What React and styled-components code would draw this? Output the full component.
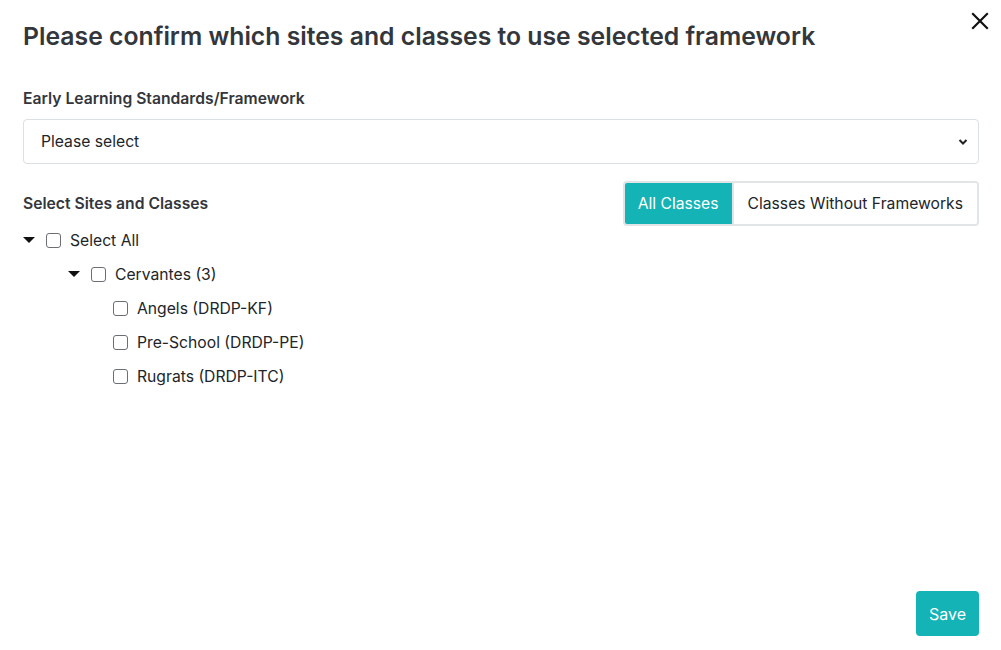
import React from "react";
import styled, { createGlobalStyle } from "styled-components";

const Global = createGlobalStyle`
  html, body { margin: 0; padding: 0; background: #fff; }
  body { font-family: Inter, "Noto Sans", sans-serif; color: #333a40; }
  * { box-sizing: border-box; }
`;

const Modal = styled.div`
  width: 1001px;
  height: 650px;
  display: flex;
  flex-direction: column;
  padding: 0 22px 14px 23px;
  position: relative;
`;

const Header = styled.div`
  display: flex;
  align-items: flex-start;
  justify-content: space-between;
  padding-top: 21px;
`;

const Title = styled.h2`
  margin: 0;
  font-size: 24.75px;
  line-height: 30px;
  font-weight: 600;
  color: #33363b;
`;

const Close = styled.button`
  position: absolute;
  top: 10px;
  right: 10px;
  width: 22px;
  height: 22px;
  border: none;
  background: none;
  padding: 0;
  display: flex;
  align-items: center;
  justify-content: center;
  cursor: pointer;
`;

const Label = styled.div`
  font-size: 15.7px;
  font-weight: 600;
  color: #33363b;
  line-height: 20px;
`;

const FieldLabel = styled(Label)`
  margin-top: 38px;
  margin-bottom: 10px;
`;

const SelectBox = styled.div`
  height: 45px;
  border: 1px solid #dcdfe3;
  border-radius: 4px;
  display: flex;
  align-items: center;
  justify-content: space-between;
  padding: 0 10px 0 17px;
  font-size: 15.7px;
  color: #212529;
`;

const SectionRow = styled.div`
  margin-top: 18px;
  display: flex;
  align-items: center;
  justify-content: space-between;
`;

const ToggleGroup = styled.div`
  display: flex;
  border: 2px solid #e2e5e8;
  border-radius: 4px;
  overflow: hidden;
  height: 45px;
  margin-top: -1px;
`;

const ToggleButton = styled.button`
  border: none;
  margin: 0;
  font-family: inherit;
  font-size: 15.7px;
  padding: 0 ${(p) => (p.$active ? 13 : 14)}px;
  background: ${(p) => (p.$active ? "#13b3b6" : "#fff")};
  color: ${(p) => (p.$active ? "#fff" : "#212529")};
  border-left: ${(p) => (p.$active ? "none" : "2px solid #e2e5e8")};
  cursor: pointer;
`;

const Tree = styled.div`
  margin-top: -3px;
  display: flex;
  flex-direction: column;
`;

const Row = styled.div`
  height: 34px;
  display: flex;
  align-items: center;
  padding-left: ${(p) => p.$indent}px;
  font-size: 15.7px;
  color: #212529;
`;

const Caret = styled.span`
  width: 0;
  height: 0;
  border-left: 6px solid transparent;
  border-right: 6px solid transparent;
  border-top: 6px solid #111;
  margin-right: 11px;
`;

const Box = styled.span`
  width: 15px;
  height: 15px;
  border: 1px solid #6b6f73;
  border-radius: 3px;
  background: #fff;
  margin-right: 9px;
  flex: none;
`;

const Spacer = styled.div`
  flex: 1;
`;

const Footer = styled.div`
  display: flex;
  justify-content: flex-end;
`;

const SaveButton = styled.button`
  height: 45px;
  width: 63px;
  padding: 0;
  border: none;
  border-radius: 4px;
  background: #13b3b6;
  color: #fff;
  font-family: inherit;
  font-size: 16px;
  cursor: pointer;
`;

const items = [
  { label: "Select All", indent: 0, caret: true },
  { label: "Cervantes (3)", indent: 45, caret: true },
  { label: "Angels (DRDP-KF)", indent: 90 },
  { label: "Pre-School (DRDP-PE)", indent: 90 },
  { label: "Rugrats (DRDP-ITC)", indent: 90 },
];

export default function App() {
  return (
    <>
      <Global />
      <Modal>
        <Header>
          <Title>Please confirm which sites and classes to use selected framework</Title>
        </Header>
        <Close aria-label="Close">
          <svg width="18" height="18" viewBox="0 0 18 18">
            <path d="M2 2 L16 16 M16 2 L2 16" stroke="#111" strokeWidth="2.2" strokeLinecap="square" />
          </svg>
        </Close>

        <FieldLabel>Early Learning Standards/Framework</FieldLabel>
        <SelectBox>
          <span>Please select</span>
          <svg width="10" height="8" viewBox="0 0 10 8">
            <path d="M1.5 2 L5 5.5 L8.5 2" stroke="#222" strokeWidth="2" fill="none" />
          </svg>
        </SelectBox>

        <SectionRow>
          <Label>Select Sites and Classes</Label>
          <ToggleGroup>
            <ToggleButton $active>All Classes</ToggleButton>
            <ToggleButton>Classes Without Frameworks</ToggleButton>
          </ToggleGroup>
        </SectionRow>

        <Tree>
          {items.map((it) => (
            <Row key={it.label} $indent={it.indent}>
              {it.caret && <Caret />}
              <Box />
              {it.label}
            </Row>
          ))}
        </Tree>

        <Spacer />
        <Footer>
          <SaveButton>Save</SaveButton>
        </Footer>
      </Modal>
    </>
  );
}
